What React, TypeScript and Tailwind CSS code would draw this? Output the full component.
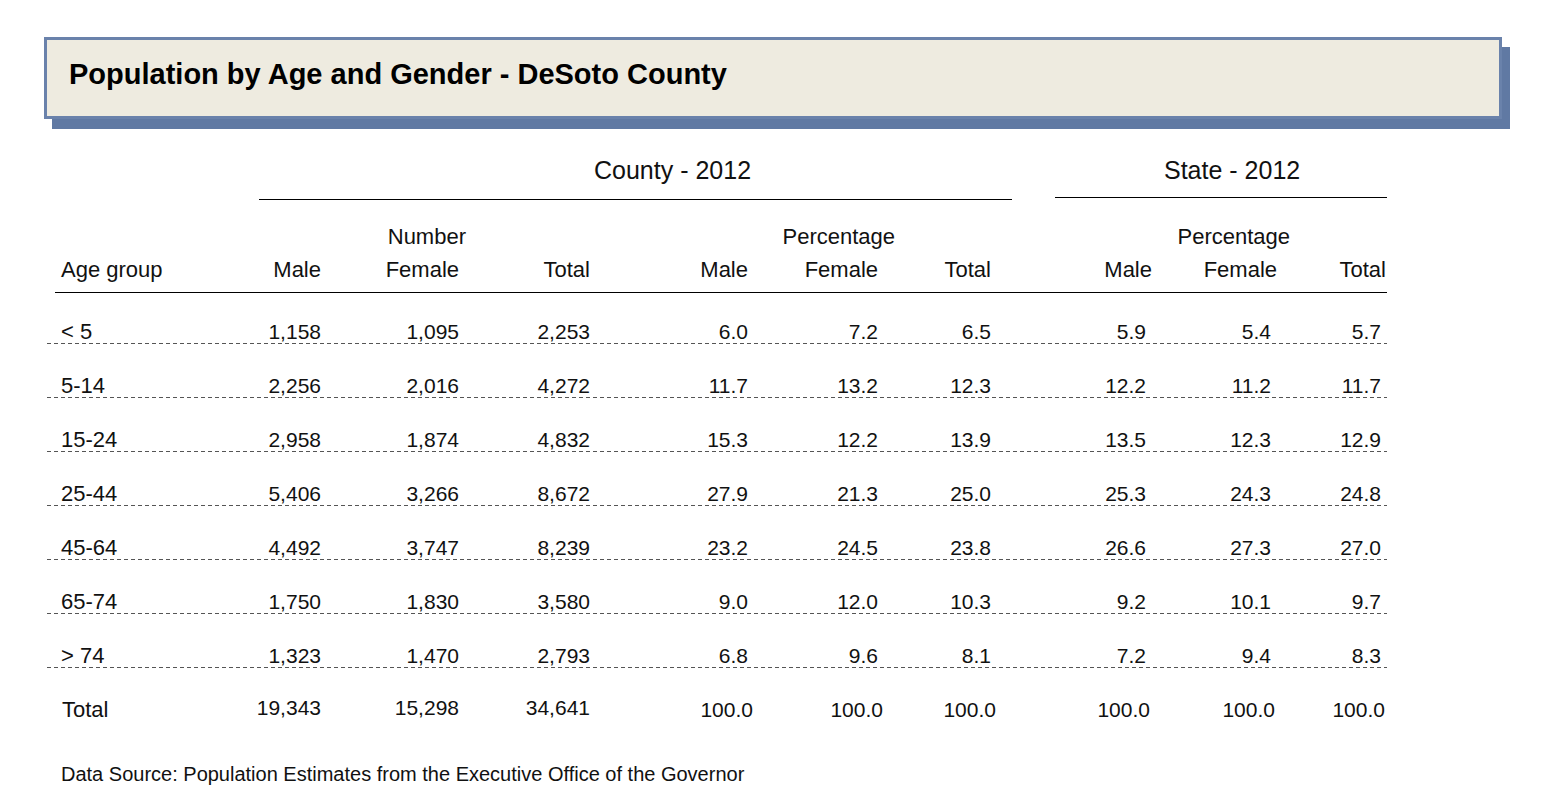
const rows: string[][] = [
  ["< 5", "1,158", "1,095", "2,253", "6.0", "7.2", "6.5", "5.9", "5.4", "5.7"],
  ["5-14", "2,256", "2,016", "4,272", "11.7", "13.2", "12.3", "12.2", "11.2", "11.7"],
  ["15-24", "2,958", "1,874", "4,832", "15.3", "12.2", "13.9", "13.5", "12.3", "12.9"],
  ["25-44", "5,406", "3,266", "8,672", "27.9", "21.3", "25.0", "25.3", "24.3", "24.8"],
  ["45-64", "4,492", "3,747", "8,239", "23.2", "24.5", "23.8", "26.6", "27.3", "27.0"],
  ["65-74", "1,750", "1,830", "3,580", "9.0", "12.0", "10.3", "9.2", "10.1", "9.7"],
  ["> 74", "1,323", "1,470", "2,793", "6.8", "9.6", "8.1", "7.2", "9.4", "8.3"],
];

const totals = ["19,343", "15,298", "34,641", "100.0", "100.0", "100.0", "100.0", "100.0", "100.0"];

// columns measured from the left edge of the dashed rules (x = 47)
const cols = "grid grid-cols-[153px_121px_138px_131px_158px_130px_113px_161px_125px_110px]";

function DataRow({ cells, first }: { cells: string[]; first?: boolean }) {
  return (
    <div>
      <div className={`${cols} items-end leading-[22px] ${first ? "h-[50px]" : "h-[53px]"}`}>
        <div className="pl-[14px] text-[22px]">{cells[0]}</div>
        {cells.slice(1).map((c, i) => (
          <div key={i} className={`text-right ${i >= 6 ? "pr-[6px]" : ""} ${i === 6 ? "pr-[5px]" : ""}`}>
            {c}
          </div>
        ))}
      </div>
      <div className="h-px w-full bg-[linear-gradient(to_right,#555_4px,transparent_4px)] bg-[length:7px_1px] bg-repeat-x" />
    </div>
  );
}

export default function App() {
  return (
    <div className="h-[799px] w-[1548px] overflow-hidden bg-white font-['Liberation_Sans',Arial,sans-serif] text-[#111]">
      <div className="ml-[44px] pt-[37px]">
        <div className="flex h-[82px] w-[1458px] items-start border-[3px] border-[#6a82ab] bg-[#eeebe0] pl-[22px] pt-[18px] shadow-[8px_10px_0_#6079a3]">
          <h1 className="text-[29px] font-bold leading-[32px] text-black">
            Population by Age and Gender - DeSoto County
          </h1>
        </div>
      </div>

      <div className="ml-[47px] w-[1340px] text-[21px]">
        {/* group headings */}
        <div className="mt-[31px] flex items-start text-[25px]">
          <div className="ml-[212px] h-[50px] w-[753px] border-b border-black pl-[335px] pt-[7px] leading-[26px]">
            County - 2012
          </div>
          <div className="ml-[43px] h-[48px] w-[332px] border-b border-black pl-[109px] pt-[7px] leading-[26px]">
            State - 2012
          </div>
        </div>

        {/* column headings */}
        <div className="ml-[8px] border-b border-black pb-[10px] pt-[25px] text-[22px] leading-[24px]">
          <div className="grid h-[24px] grid-cols-[145px_121px_138px_131px_158px_130px_113px_161px_125px_110px]">
            <div />
            <div />
            <div className="-mr-[7px] text-right">Number</div>
            <div />
            <div />
            <div className="-mr-[17px] text-right">Percentage</div>
            <div />
            <div />
            <div className="-mr-[13px] text-right">Percentage</div>
            <div />
          </div>
          <div className="mt-[9px] grid h-[24px] grid-cols-[145px_121px_138px_131px_158px_130px_113px_161px_125px_110px]">
            <div className="pl-[6px]">Age group</div>
            <div className="text-right">Male</div>
            <div className="text-right">Female</div>
            <div className="text-right">Total</div>
            <div className="text-right">Male</div>
            <div className="text-right">Female</div>
            <div className="text-right">Total</div>
            <div className="text-right">Male</div>
            <div className="text-right">Female</div>
            <div className="pr-px text-right">Total</div>
          </div>
        </div>

        {rows.map((r, i) => (
          <DataRow key={r[0]} cells={r} first={i === 0} />
        ))}

        {/* total row */}
        <div className={`${cols} pt-[31px] leading-[22px]`}>
          <div className="pl-[15px] text-[22px]">Total</div>
          {totals.map((t, i) => (
            <div
              key={i}
              className={
                i < 3
                  ? "-mt-[2px] text-right"
                  : i < 6
                    ? "-mr-[5px] text-right"
                    : "pr-[2px] text-right"
              }
            >
              {t}
            </div>
          ))}
        </div>

        <p className="mt-[42px] pl-[14px] text-[20px] leading-[22px]">
          Data Source: Population Estimates from the Executive Office of the Governor
        </p>
      </div>
    </div>
  );
}
